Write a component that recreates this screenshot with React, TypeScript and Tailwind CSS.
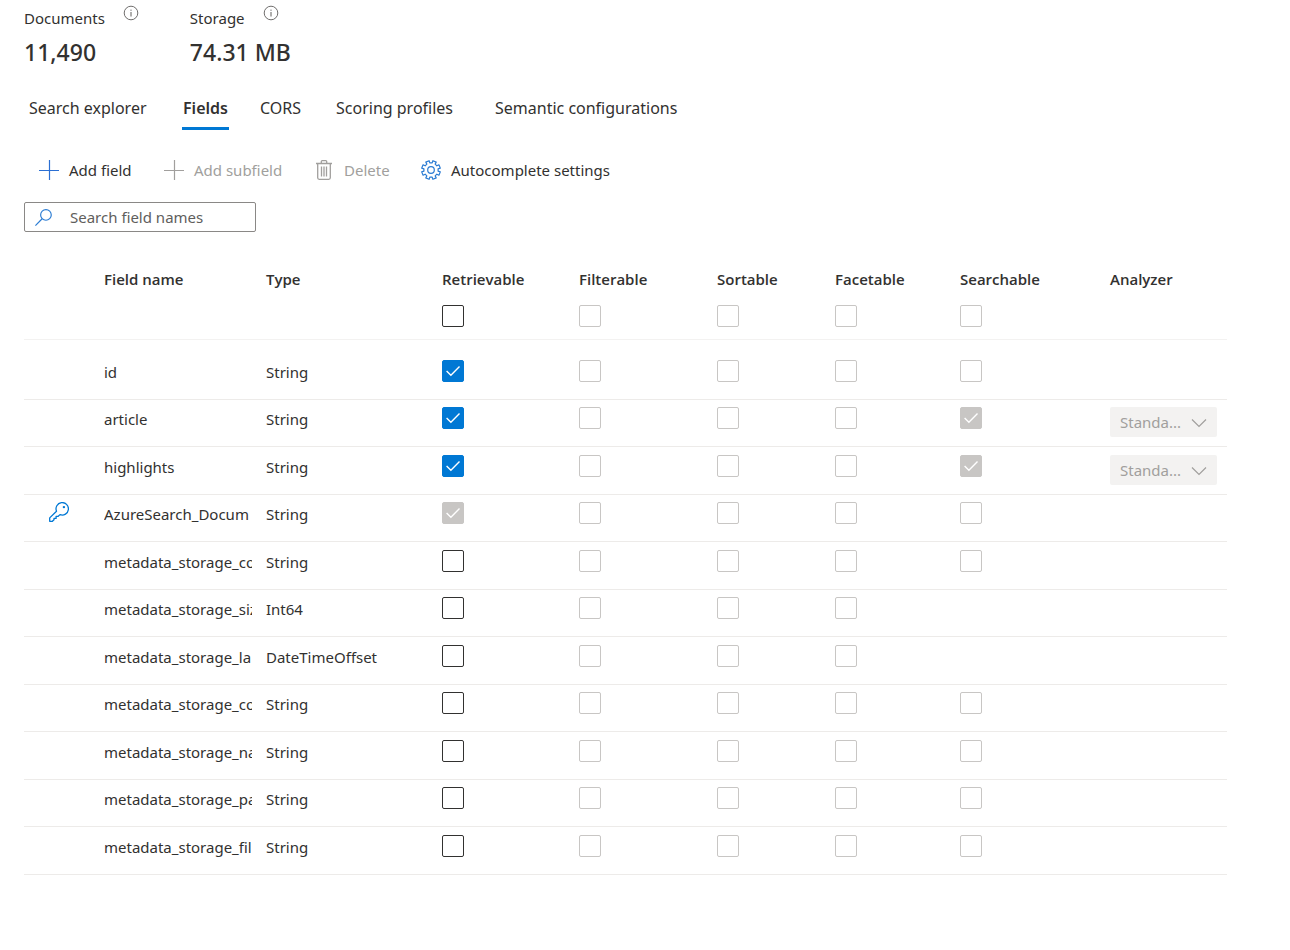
import React, { useState } from 'react';

type Mark = 'on' | 'off' | 'locked-on' | 'locked-off' | 'none';

type Field = {
  name: string;
  type: string;
  isKey?: boolean;
  marks: Mark[];
  analyzer?: string;
};

const attributes = ['Retrievable', 'Filterable', 'Sortable', 'Facetable', 'Searchable'];

const L: Mark = 'locked-off';

const fields: Field[] = [
  { name: 'id', type: 'String', marks: ['on', L, L, L, L] },
  { name: 'article', type: 'String', marks: ['on', L, L, L, 'locked-on'], analyzer: 'Standa...' },
  { name: 'highlights', type: 'String', marks: ['on', L, L, L, 'locked-on'], analyzer: 'Standa...' },
  { name: 'AzureSearch_Docum', type: 'String', isKey: true, marks: ['locked-on', L, L, L, L] },
  { name: 'metadata_storage_co', type: 'String', marks: ['off', L, L, L, L] },
  { name: 'metadata_storage_siz', type: 'Int64', marks: ['off', L, L, L, 'none'] },
  { name: 'metadata_storage_la', type: 'DateTimeOffset', marks: ['off', L, L, L, 'none'] },
  { name: 'metadata_storage_co', type: 'String', marks: ['off', L, L, L, L] },
  { name: 'metadata_storage_na', type: 'String', marks: ['off', L, L, L, L] },
  { name: 'metadata_storage_pa', type: 'String', marks: ['off', L, L, L, L] },
  { name: 'metadata_storage_fil', type: 'String', marks: ['off', L, L, L, L] },
];

function InfoIcon() {
  return (
    <svg className="size-4" viewBox="0 0 16 16" fill="none" stroke="#605e5c" aria-hidden="true">
      <circle cx="8" cy="8" r="6.8" strokeWidth="0.9" />
      <path d="M8 7v4.5" strokeWidth="1" />
      <path d="M8 4.6v1.2" strokeWidth="1" />
    </svg>
  );
}

function PlusIcon({ tone }: { tone: string }) {
  return (
    <svg className={`size-5 ${tone}`} viewBox="0 0 20 20" fill="none" stroke="currentColor" aria-hidden="true">
      <path d="M10.5 0v20M0 10.5h20" strokeWidth="1.2" />
    </svg>
  );
}

function TrashIcon() {
  return (
    <svg className="h-5 w-4" viewBox="0 0 16 20" fill="none" stroke="#a19f9d" strokeWidth="1.3" aria-hidden="true">
      <path d="M0 3.5h16M5.3 3.5V1.6q0-.9.9-.9h3.6q.9 0 .9.9v1.9M1.7 3.5v14.3q0 1.5 1.5 1.5h9.6q1.5 0 1.5-1.5V3.5" />
      <path d="M5.5 6.5v10M8 6.5v10M10.5 6.5v10" />
    </svg>
  );
}

function GearIcon() {
  const teeth = 8;
  const points: string[] = [];
  for (let i = 0; i < teeth; i++) {
    const base = (i * 360) / teeth - 67.5;
    const spots: [number, number][] = [
      [-13, 7.2],
      [-11, 9.5],
      [11, 9.5],
      [13, 7.2],
    ];
    spots.forEach(([angle, radius]) => {
      const a = ((base + angle) * Math.PI) / 180;
      points.push(`${(10 + radius * Math.cos(a)).toFixed(2)},${(10 + radius * Math.sin(a)).toFixed(2)}`);
    });
  }
  return (
    <svg className="size-5" viewBox="0 0 20 20" fill="none" stroke="#2b7cd3" strokeWidth="1.2" strokeLinejoin="round" aria-hidden="true">
      <polygon points={points.join(' ')} />
      <circle cx="10" cy="10" r="3.3" />
    </svg>
  );
}

function SearchIcon() {
  return (
    <svg className="size-[17px] shrink-0" viewBox="0 0 16 16" fill="none" stroke="#2b7cd3" strokeWidth="1.1" aria-hidden="true">
      <circle cx="10.3" cy="5.6" r="5" />
      <path d="M6.7 9.2.4 15.6" />
    </svg>
  );
}

function KeyIcon() {
  return (
    <svg className="size-5" viewBox="0 0 20 20" fill="none" stroke="#0078d4" strokeWidth="1.3" strokeLinejoin="round" aria-hidden="true">
      <path d="M.7 19.3v-3.4l6.8-6.7A6.2 6.2 0 1 1 11 12.6l-1.8 1.7H7.1v2.1H5v1.3l-1.6 1.6z" />
      <circle cx="14.9" cy="5.1" r="1.2" fill="#0078d4" stroke="none" />
    </svg>
  );
}

function CheckBox({ mark, label }: { mark: Mark; label: string }) {
  const [checked, setChecked] = useState(mark === 'on' || mark === 'locked-on');
  if (mark === 'none') return null;
  const locked = mark === 'locked-on' || mark === 'locked-off';
  return (
    <span className="grid size-[22px]">
      <input
        type="checkbox"
        aria-label={label}
        checked={checked}
        disabled={locked}
        onChange={(e) => setChecked(e.target.checked)}
        className="col-start-1 row-start-1 size-[22px] appearance-none rounded-xs border border-[#323130] bg-white checked:border-[#0078d4] checked:bg-[#0078d4] disabled:border-[#c8c6c4] disabled:checked:border-[#c8c6c4] disabled:checked:bg-[#c8c6c4]"
      />
      {checked && (
        <svg
          className="pointer-events-none col-start-1 row-start-1 size-[22px]"
          viewBox="0 0 22 22"
          fill="none"
          stroke="#fff"
          strokeWidth="1.4"
          aria-hidden="true"
        >
          <path d="M4.6 11l4.3 4.2 8.6-8.6" />
        </svg>
      )}
    </span>
  );
}

function Stat({ label, value }: { label: string; value: string }) {
  return (
    <div className="flex flex-col">
      <div className="flex items-start gap-[18px]">
        <span className="pt-2 text-[15px] leading-5">{label}</span>
        <span className="pt-[5px]">
          <InfoIcon />
        </span>
      </div>
      <span className="pt-2 text-[23px] leading-8 font-medium">{value}</span>
    </div>
  );
}

function Tab({ label, active = false }: { label: string; active?: boolean }) {
  return (
    <button
      type="button"
      role="tab"
      aria-selected={active}
      className={
        active
          ? 'h-11 border-b-3 border-[#0078d4] px-px pt-0.5 text-base font-semibold whitespace-nowrap'
          : 'h-11 border-b-3 border-transparent px-px pt-0.5 text-base whitespace-nowrap'
      }
    >
      {label}
    </button>
  );
}

function Analyzer({ value, field }: { value: string; field: string }) {
  return (
    <span className="grid h-[30px] w-[107px] items-center">
      <select
        aria-label={`Analyzer for ${field}`}
        disabled
        className="col-start-1 row-start-1 h-[30px] appearance-none rounded-xs bg-[#f3f2f1] pl-2.5 text-[15px] text-[#a19f9d] opacity-100"
      >
        <option>{value}</option>
      </select>
      <svg
        className="pointer-events-none col-start-1 row-start-1 mt-0.5 mr-2.5 h-4 w-4 justify-self-end"
        viewBox="0 0 16 16"
        fill="none"
        stroke="#a19f9d"
        strokeWidth="1.2"
        aria-hidden="true"
      >
        <path d="M1 4.5l7 7 7-7" />
      </svg>
    </span>
  );
}

function FieldRow({ field, first }: { field: Field; first: boolean }) {
  return (
    <tr
      className={
        first
          ? 'h-[60px] align-top [&>td]:border-b [&>td]:border-[#edebe9] [&>td]:pt-5'
          : 'h-12 align-top even:h-[47px] [&>td]:border-b [&>td]:border-[#edebe9] [&>td]:pt-2 even:[&>td]:pt-[7px]'
      }
    >
      <td className="pl-[25px]">{field.isKey && <KeyIcon />}</td>
      <td>
        <div className="mr-3.5 overflow-hidden text-[15px] leading-6 whitespace-nowrap">{field.name}</div>
      </td>
      <td className="text-[15px] leading-6">{field.type}</td>
      {field.marks.map((mark, i) => (
        <td key={attributes[i]}>
          <CheckBox mark={mark} label={`${attributes[i]}: ${field.name}`} />
        </td>
      ))}
      <td>{field.analyzer && <Analyzer value={field.analyzer} field={field.name} />}</td>
    </tr>
  );
}

export default function App() {
  return (
    <main className="min-h-screen bg-white pr-[63px] pl-6 font-['Noto_Sans','Open_Sans',sans-serif] text-[#323130]">
      <section className="flex gap-[51px]">
        <Stat label="Documents" value="11,490" />
        <Stat label="Storage" value="74.31 MB" />
      </section>

      <div
        role="tablist"
        className="mt-[18px] grid grid-cols-[154px_77px_76px_159px_auto] justify-items-start pl-1"
      >
        <Tab label="Search explorer" />
        <Tab label="Fields" active />
        <Tab label="CORS" />
        <Tab label="Scoring profiles" />
        <Tab label="Semantic configurations" />
      </div>

      <div
        role="toolbar"
        aria-label="Field commands"
        className="mt-6 grid h-8 grid-cols-[125px_152px_105px_auto] items-center pl-[15px] text-[15px] leading-6"
      >
        <button type="button" className="flex items-center gap-2.5">
          <PlusIcon tone="text-[#2b6fd3]" />
          Add field
        </button>
        <button type="button" disabled className="flex items-center gap-2.5 text-[#a19f9d]">
          <PlusIcon tone="text-[#a19f9d]" />
          Add subfield
        </button>
        <button type="button" disabled className="flex items-center gap-3 text-[#a19f9d]">
          <TrashIcon />
          Delete
        </button>
        <button type="button" className="flex items-center gap-2.5">
          <GearIcon />
          Autocomplete settings
        </button>
      </div>

      <label className="mt-4 flex h-[30px] w-[232px] items-center rounded-xs border border-[#8a8886] pl-2.5">
        <SearchIcon />
        <input
          type="text"
          aria-label="Search field names"
          placeholder="Search field names"
          className="ml-[18px] w-full min-w-0 text-[15px] leading-6 outline-none placeholder:text-[#605e5c]"
        />
      </label>

      <table className="mt-[35px] w-full table-fixed border-separate border-spacing-0 text-left">
        <colgroup>
          <col className="w-20" />
          <col className="w-[162px]" />
          <col className="w-[176px]" />
          <col className="w-[137px]" />
          <col className="w-[138px]" />
          <col className="w-[118px]" />
          <col className="w-[125px]" />
          <col className="w-[150px]" />
          <col />
        </colgroup>
        <thead>
          <tr className="h-[73px] align-top font-['Open_Sans','Noto_Sans',sans-serif] text-[15px] leading-6 [&>*]:border-b [&>*]:border-[#f3f2f1] [&>th]:font-semibold">
            <td />
            <th scope="col">Field name</th>
            <th scope="col">Type</th>
            {attributes.map((name, i) => (
              <th scope="col" key={name}>
                <div className="flex flex-col gap-3.5">
                  {name}
                  <CheckBox mark={i === 0 ? 'off' : 'locked-off'} label={`${name}: all fields`} />
                </div>
              </th>
            ))}
            <th scope="col">Analyzer</th>
          </tr>
        </thead>
        <tbody>
          {fields.map((field, i) => (
            <FieldRow key={i} field={field} first={i === 0} />
          ))}
        </tbody>
      </table>
    </main>
  );
}
